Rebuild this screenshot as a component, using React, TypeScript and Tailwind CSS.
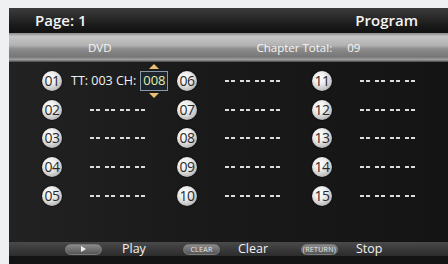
import React from "react";

const font = { fontFamily: '"Open Sans", "DejaVu Sans", sans-serif' };

const Ball = ({ n }: { n: string }) => (
  <div className="flex h-[20px] w-[20px] shrink-0 items-center justify-center rounded-full bg-[radial-gradient(circle_at_40%_35%,#ffffff_0%,#ececec_35%,#b4b4b4_78%,#808080_100%)] text-[14px] leading-none tracking-[-0.5px] text-[#2a2a2a] shadow-[0_0_2px_#000]">
    {n}
  </div>
);

const Dashes = () => (
  <div className="flex gap-[5px]">
    {[0, 1, 2, 3].map((i) => (
      <div key={i} className="flex gap-[2px]">
        <span className="h-[2px] w-[4px] bg-[#dcdcdc]" />
        <span className="h-[2px] w-[4px] bg-[#dcdcdc]" />
      </div>
    ))}
  </div>
);

const Slot = ({ n, first }: { n: string; first?: boolean }) => (
  <div className="flex h-[20px] w-[135px] items-center">
    <Ball n={n} />
    {first ? (
      <div className="ml-[9px] flex items-center text-[12.5px] text-[#f2f2f2]">
        <span>TT: 003 CH:</span>
        <div className="relative ml-[4px] flex h-[20px] w-[28px] items-center justify-center border border-[#8a98a8] bg-[#1d262e] text-[13px] text-[#e6eca8]">
          008
          <span className="absolute top-[-8px] left-1/2 h-0 w-0 -translate-x-1/2 border-x-[5px] border-b-[5px] border-x-transparent border-b-[#e8c070]" />
          <span className="absolute bottom-[-8px] left-1/2 h-0 w-0 -translate-x-1/2 border-x-[5px] border-t-[5px] border-x-transparent border-t-[#e8c070]" />
        </div>
      </div>
    ) : (
      <div className="ml-[28px]">
        <Dashes />
      </div>
    )}
  </div>
);

const Pill = ({ label }: { label: React.ReactNode }) => (
  <div className="flex h-[11px] w-[37px] items-center justify-center rounded-full border border-[#7a7a7a] bg-[linear-gradient(#8a8a8a,#555)] text-[7px] leading-none tracking-[0.3px] text-[#e8e8e8]">
    {label}
  </div>
);

const rows = [
  ["01", "06", "11"],
  ["02", "07", "12"],
  ["03", "08", "13"],
  ["04", "09", "14"],
  ["05", "10", "15"],
];

export default function App() {
  return (
    <div className="h-[264px] w-[448px] bg-[#eef0f2] pt-[8px] pl-[9px]" style={font}>
      <div className="flex h-[256px] w-[439px] flex-col bg-[#161616]">
        <div className="flex h-[25px] items-center justify-between bg-[linear-gradient(#3c3c3c,#1a1a1a_70%,#111)] pr-[30px] pl-[26px] text-[15px] font-semibold text-[#f4f4f4]">
          <span>Page: 1</span>
          <span>Program</span>
        </div>
        <div className="flex h-[29px] items-center bg-[linear-gradient(#8a8a8a,#c6c6c6_12%,#b2b2b2_42%,#8c8c8c_55%,#767676_82%,#a0a0a0_92%,#444)] text-[11.5px] text-[#f6f6f6]">
          <span className="ml-[79px]">DVD</span>
          <span className="ml-[145px]">Chapter Total:</span>
          <span className="ml-[15px]">09</span>
        </div>
        <div className="flex h-[180px] flex-col gap-[8.7px] bg-[linear-gradient(90deg,#222_0%,#1a1a1a_40%,#141414_100%)] pt-[9px] pl-[33px]">
          {rows.map((r, i) => (
            <div key={i} className="flex">
              <Slot n={r[0]} first={i === 0} />
              <Slot n={r[1]} />
              <Slot n={r[2]} />
            </div>
          ))}
        </div>
        <div className="flex h-[14px] items-center bg-[linear-gradient(#4a4a4a,#3a3a3a_50%,#2c2c2c)] pl-[56px] text-[12.5px] text-[#f2f2f2]">
          <div className="flex w-[118px] items-center gap-[20px]">
            <Pill label={<span className="h-0 w-0 border-y-[3px] border-l-[5px] border-y-transparent border-l-[#f0f0f0]" />} />
            <span>Play</span>
          </div>
          <div className="flex w-[118px] items-center gap-[18px]">
            <Pill label="CLEAR" />
            <span>Clear</span>
          </div>
          <div className="flex items-center gap-[18px]">
            <Pill label="(RETURN)" />
            <span>Stop</span>
          </div>
        </div>
        <div className="flex-1 bg-[#141414]" />
      </div>
    </div>
  );
}
